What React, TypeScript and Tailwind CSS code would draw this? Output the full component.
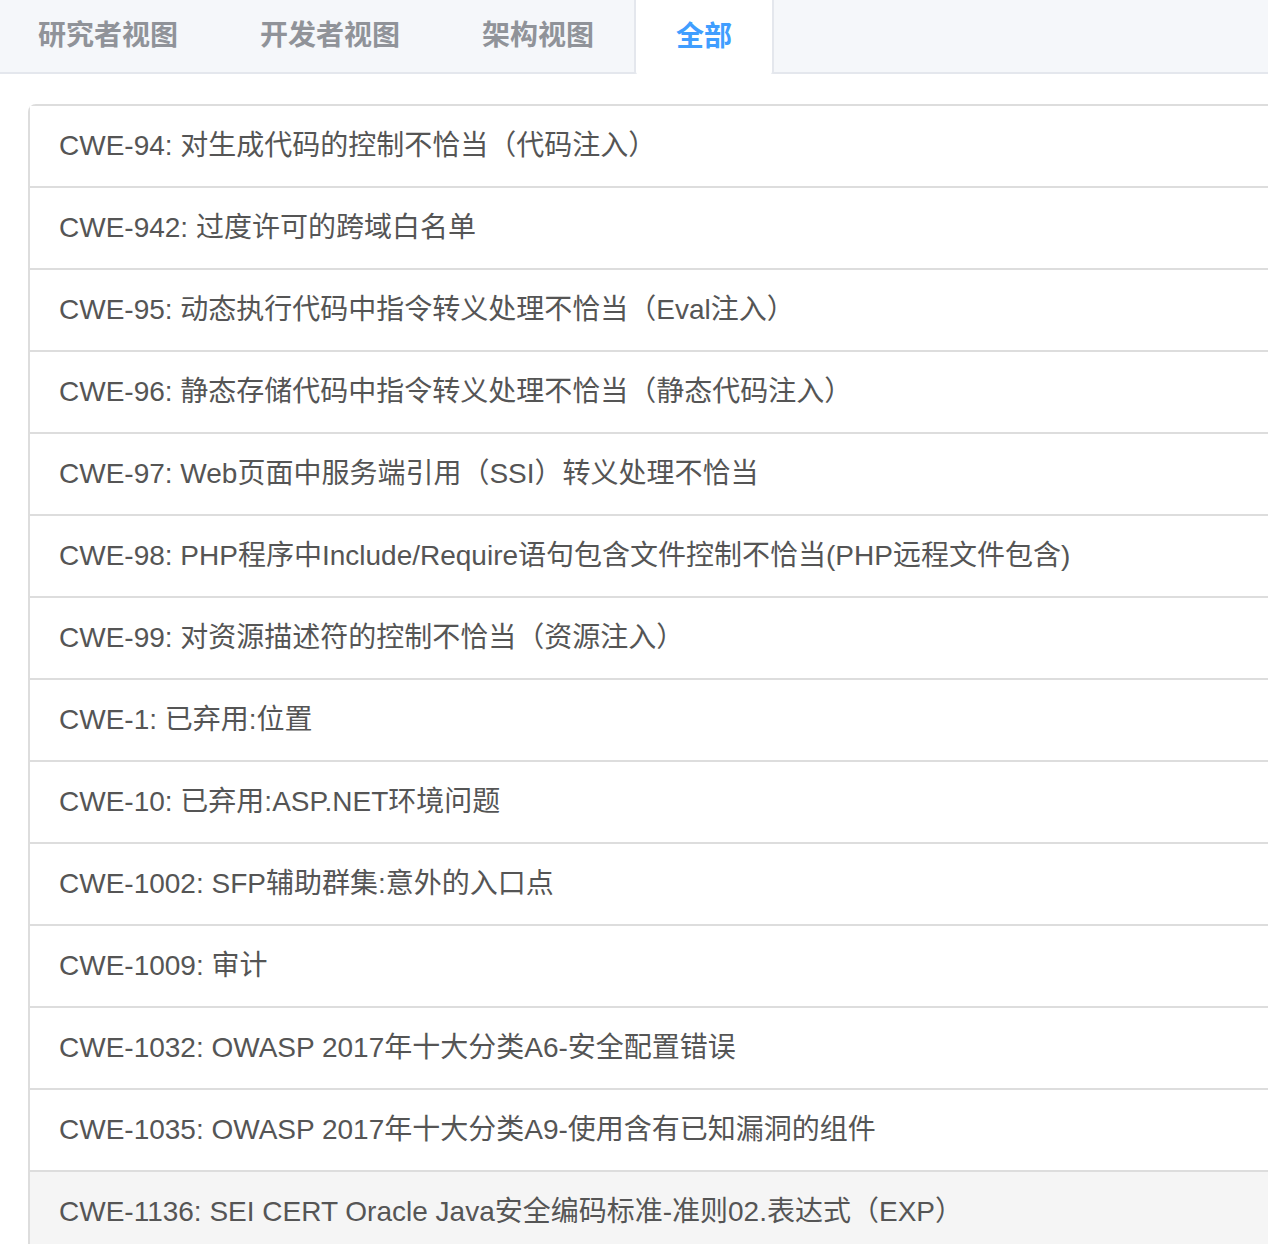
import { useState } from "react";

const tabs = [
  { label: "研究者视图", pad: "pl-[38px] pr-[42px]" },
  { label: "开发者视图", pad: "px-[40px]" },
  { label: "架构视图", pad: "pl-[42px] pr-[40px]" },
  { label: "全部", pad: "px-[40px]" },
];

const items = [
  "CWE-94: 对生成代码的控制不恰当（代码注入）",
  "CWE-942: 过度许可的跨域白名单",
  "CWE-95: 动态执行代码中指令转义处理不恰当（Eval注入）",
  "CWE-96: 静态存储代码中指令转义处理不恰当（静态代码注入）",
  "CWE-97: Web页面中服务端引用（SSI）转义处理不恰当",
  "CWE-98: PHP程序中Include/Require语句包含文件控制不恰当(PHP远程文件包含)",
  "CWE-99: 对资源描述符的控制不恰当（资源注入）",
  "CWE-1: 已弃用:位置",
  "CWE-10: 已弃用:ASP.NET环境问题",
  "CWE-1002: SFP辅助群集:意外的入口点",
  "CWE-1009: 审计",
  "CWE-1032: OWASP 2017年十大分类A6-安全配置错误",
  "CWE-1035: OWASP 2017年十大分类A9-使用含有已知漏洞的组件",
  "CWE-1136: SEI CERT Oracle Java安全编码标准-准则02.表达式（EXP）",
];

const font = {
  fontFamily: '"Liberation Sans", "Noto Sans CJK SC", sans-serif',
};

export default function App() {
  const [active, setActive] = useState(3);
  const [hover, setHover] = useState(items.length - 1);

  return (
    <div className="w-[1268px] h-[1244px] overflow-hidden bg-white" style={font}>
      {/* tab header */}
      <div className="flex h-[74px] bg-[#f5f7fa] border-b-2 border-[#e4e7ed]">
        {tabs.map((t, i) => (
          <button
            key={t.label}
            onClick={() => setActive(i)}
            className={
              (i === active
                ? "relative h-[74px] -mb-[2px] bg-white border-x-2 border-[#e4e7ed] rounded-b-[3px] text-[#409eff] "
                : "h-[72px] text-[#909399] ") +
              "text-[28px] font-bold " +
              t.pad
            }
          >
            {t.label}
          </button>
        ))}
      </div>

      {/* list */}
      <div className="pt-[30px] pl-[28px]">
        <ul className="border-l-2 border-t-2 border-[#dddddd] rounded-tl-[8px]">
          {items.map((it, i) => (
            <li
              key={it}
              onMouseEnter={() => setHover(i)}
              className={
                "h-[82px] flex items-center px-[29px] border-b-2 border-[#dddddd] text-[28px] text-[#555555] whitespace-nowrap " +
                (hover === i ? "bg-[#f5f5f5]" : "bg-white")
              }
            >
              {it}
            </li>
          ))}
        </ul>
      </div>
    </div>
  );
}
